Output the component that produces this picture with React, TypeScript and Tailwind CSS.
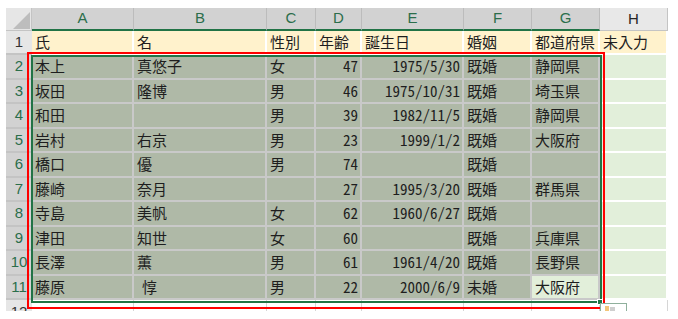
import React from 'react';

const rows: string[][] = [
  ['本上', '真悠子', '女', '47', '1975/5/30', '既婚', '静岡県'],
  ['坂田', '隆博', '男', '46', '1975/10/31', '既婚', '埼玉県'],
  ['和田', '', '男', '39', '1982/11/5', '既婚', '静岡県'],
  ['岩村', '右京', '男', '23', '1999/1/2', '既婚', '大阪府'],
  ['橋口', '優', '男', '74', '', '既婚', ''],
  ['藤崎', '奈月', '', '27', '1995/3/20', '既婚', '群馬県'],
  ['寺島', '美帆', '女', '62', '1960/6/27', '既婚', ''],
  ['津田', '知世', '女', '60', '', '既婚', '兵庫県'],
  ['長澤', '薫', '男', '61', '1961/4/20', '既婚', '長野県'],
  ['藤原', '惇', '男', '22', '2000/6/9', '未婚', '大阪府'],
];

const heads = ['氏', '名', '性別', '年齢', '誕生日', '婚姻', '都道府県', '未入力'];
const letters = ['A', 'B', 'C', 'D', 'E', 'F', 'G', 'H'];

const jp = "font-['Noto_Sans_CJK_JP','Noto_Sans_CJK_SC',sans-serif] [font-feature-settings:'hwid']";
const hd = "font-['Liberation_Sans','Noto_Sans',sans-serif]";

function DataCell({ value, r, c }: { value: string; r: number; c: number }) {
  const numeric = c === 3 || c === 4;
  const active = r === 9 && c === 6;
  let tone = 'bg-[#afb9a7] border-[#c9c9c9]';
  if (c === 7) tone = 'bg-[#e2efda] border-white';
  else if (active) tone = 'bg-[#e2efda] border-[#c9c9c9]';
  return (
    <div
      className={`flex items-center border-r-2 border-b-2 overflow-hidden whitespace-nowrap text-[15px] text-[#1e1e1e] ${jp} ${tone} ${
        numeric ? 'justify-end pr-[2px]' : 'pl-[3px]'
      } ${r === 9 && c === 1 ? 'pl-[8px]' : ''}`}
    >
      {value}
    </div>
  );
}

function RowHead({ n, selected }: { n: number; selected: boolean }) {
  return (
    <div
      className={`flex items-center justify-center border-b-2 border-[#c4c4c4] text-[15px] ${hd} ${
        selected ? 'bg-[#d2d2d2] text-[#2b6e4b]' : 'bg-[#e6e6e6] text-[#333]'
      }`}
    >
      {n}
    </div>
  );
}

export default function App() {
  return (
    <div className="w-[678px] h-[319px] bg-white pl-[6px] pt-[8px]">
      <div className="relative w-[662px]">
        <div className="grid h-[303px] overflow-hidden grid-cols-[26px_102px_133px_49px_46px_102px_68px_68px_68px] grid-rows-[23px_24px_repeat(10,24.5px)_16px]">
          {/* corner */}
          <div className="relative bg-[#e6e6e6] border-r border-b border-[#c4c4c4]">
            <svg className="absolute left-[7px] top-[4px]" width="17" height="17" viewBox="0 0 17 17">
              <polygon points="17,0 17,17 0,17" fill="#bdbdbd" />
            </svg>
          </div>
          {letters.map((l, i) =>
            i < 7 ? (
              <div
                key={l}
                className={`flex items-center justify-center bg-[#d2d2d2] border-r border-[#bcbcbc] border-b-2 border-b-[#217346] text-[15px] text-[#2b6e4b] ${hd}`}
              >
                {l}
              </div>
            ) : (
              <div
                key={l}
                className={`flex items-center justify-center bg-[#e8e8e8] border-r border-b border-[#c4c4c4] text-[15px] text-[#262626] ${hd}`}
              >
                {l}
              </div>
            )
          )}

          {/* row 1 */}
          <RowHead n={1} selected={false} />
          {heads.map((h, i) => (
            <div
              key={h}
              className={`flex items-center pl-[3px] bg-[#fff2cc] border-r-2 border-b-2 border-white text-[15px] text-[#1e1e1e] whitespace-nowrap overflow-hidden ${jp}`}
            >
              {h}
            </div>
          ))}

          {rows.map((row, r) => (
            <React.Fragment key={r}>
              <RowHead n={r + 2} selected={true} />
              {[...row, ''].map((v, c) => (
                <DataCell key={c} value={v} r={r} c={c} />
              ))}
            </React.Fragment>
          ))}

          {/* row 12, cut off */}
          <div className={`flex justify-center bg-[#e6e6e6] text-[15px] text-[#333] leading-[18px] pt-[3px] ${hd}`}>12</div>
          {letters.map((l) => (
            <div key={l} className="bg-white border-r border-[#d6d6d6]" />
          ))}
        </div>

        {/* selection border */}
        <div className="absolute left-[25px] top-[47px] w-[571px] h-[248px] border-2 border-[#217346] pointer-events-none" />
        <div className="absolute left-[591px] top-[291px] w-[6px] h-[6px] bg-[#217346] border border-white" />
        {/* red highlight frame */}
        <div className="absolute left-[21px] top-[44px] w-[578px] h-[257px] border-[2px] border-[#ff0000] pointer-events-none" />
        {/* quick analysis button, cut off */}
        <div className="absolute left-[594px] top-[295px] w-[27px] h-[8px] overflow-hidden bg-white border-t border-l border-r border-[#8fb09c]">
          <svg className="absolute left-[4px] top-[2px]" width="10" height="8" viewBox="0 0 10 8">
            <rect x="0" y="0" width="4" height="8" fill="#f3c77a" />
            <rect x="5" y="1" width="5" height="7" fill="#cfcfcf" />
          </svg>
        </div>
      </div>
    </div>
  );
}
